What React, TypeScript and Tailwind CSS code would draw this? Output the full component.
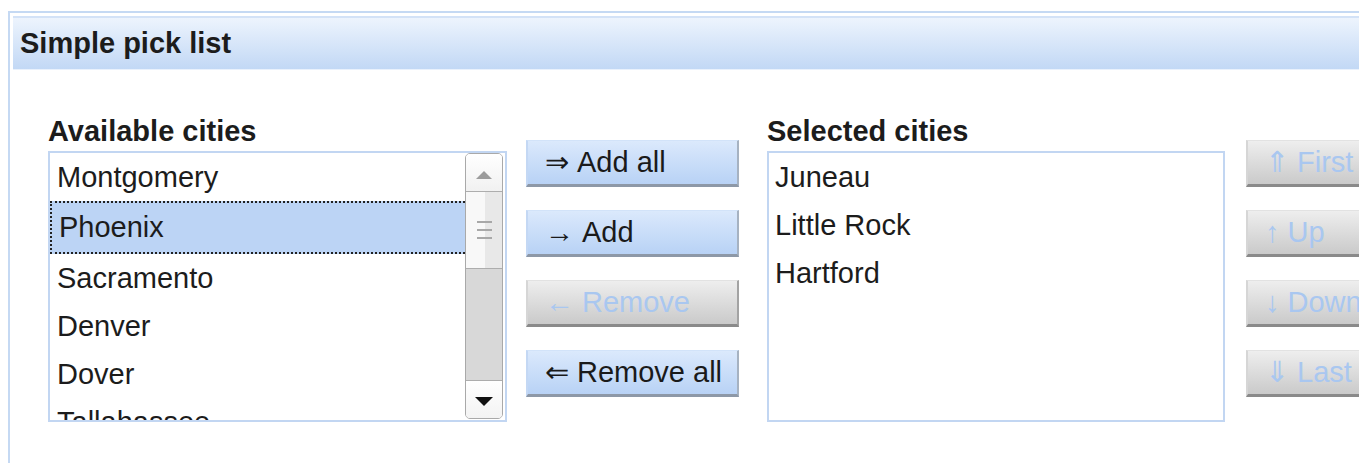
import React from 'react';

const available = ['Montgomery', 'Phoenix', 'Sacramento', 'Denver', 'Dover', 'Tallahassee'];
const selected = ['Juneau', 'Little Rock', 'Hartford'];

function PickButton({ arrow, label, disabled }: { arrow: string; label: string; disabled?: boolean }) {
  const tone = disabled
    ? 'bg-gradient-to-b from-[#eeeeee] to-[#cacaca] border-t-[#e2e2e2] border-l-[#d6d6d6] border-r-[#a3a3a3] border-b-[#8a8a8a] text-[#a9c7f0]'
    : 'bg-gradient-to-b from-[#dbe9fc] to-[#b8d2f5] border-t-[#d2e3f9] border-l-[#c4d8f4] border-r-[#a6b2c1] border-b-[#8d98a7] text-[#1a1a1a]';
  return (
    <button
      className={`shrink-0 w-[213px] h-[47px] flex items-center pl-[17px] border-t border-l-2 border-r-2 border-b-[3px] text-[29px] leading-none whitespace-nowrap ${tone}`}
    >
      <span>{arrow}</span>
      <span className="ml-[8px]">{label}</span>
    </button>
  );
}

function ScrollBar() {
  return (
    <div className="w-[38px] shrink-0 mr-[2px] mb-[1px] flex flex-col border border-[#a9a9a9] rounded-[5px] overflow-hidden">
      {/* up arrow */}
      <div className="h-[38px] flex items-center justify-center bg-gradient-to-b from-white to-[#f1f1f1] border-b border-[#adadad]">
        <svg width="16" height="8" viewBox="0 0 16 8" className="mt-[4px]">
          <polygon points="0,8 8,0 16,8" fill="#9c9c9c" />
        </svg>
      </div>
      {/* thumb */}
      <div className="h-[77px] flex flex-col items-center justify-center gap-[6px] bg-[linear-gradient(to_right,#f8f8f8_52%,#e8e8e8_52%)] border-b border-[#adadad]">
        <div className="w-[15px] h-[2px] bg-[#a8a8a8]" />
        <div className="w-[15px] h-[2px] bg-[#a8a8a8]" />
        <div className="w-[15px] h-[2px] bg-[#a8a8a8]" />
      </div>
      {/* track */}
      <div className="flex-1 bg-[#d8d8d8]" />
      {/* down arrow */}
      <div className="h-[38px] flex items-center justify-center bg-gradient-to-b from-white to-[#f3f3f3] border-t border-[#adadad]">
        <svg width="18" height="9" viewBox="0 0 18 9" className="mt-[4px]">
          <polygon points="0,0 18,0 9,9" fill="#111111" />
        </svg>
      </div>
    </div>
  );
}

export default function App() {
  return (
    <div className="w-[1359px] h-[463px] overflow-hidden bg-white font-['Liberation_Sans',Arial,sans-serif] text-[#1c1c1c]">
      <div className="ml-[8px] mt-[11px] w-[1520px] h-[520px] border-t-2 border-l-2 border-[#c5d9f3] pt-[3px] pl-[3px]">
        {/* panel header */}
        <div className="h-[54px] flex items-center pl-[7px] border-t-2 border-[#d3e2f7] border-b border-b-[#e9f1fc] bg-gradient-to-b from-[#edf4fd] to-[#c2d8f5]">
          <span className="text-[29px] font-bold leading-none">Simple pick list</span>
        </div>

        <div className="flex items-center pt-[45px] pl-[35px]">
          {/* source list */}
          <div className="w-[459px] shrink-0">
            <div className="text-[29px] font-bold leading-[33px] mb-[3px]">Available cities</div>
            <div className="h-[271px] flex border-2 border-[#c2d6f2] bg-white">
              <div className="flex-1 overflow-hidden text-[29px]">
                {available.map((city) =>
                  city === 'Phoenix' ? (
                    <div
                      key={city}
                      className="h-[53px] leading-[49px] pl-[7px] bg-[#bcd4f5] border-y-2 border-l-2 border-dotted border-[#222]"
                    >
                      {city}
                    </div>
                  ) : (
                    <div key={city} className="h-[48px] leading-[48px] pl-[7px] whitespace-nowrap">
                      {city}
                    </div>
                  )
                )}
              </div>
              <ScrollBar />
            </div>
          </div>

          {/* move buttons */}
          <div className="ml-[19px] shrink-0 flex flex-col gap-[23px]">
            <PickButton arrow="⇒" label="Add all" />
            <PickButton arrow="→" label="Add" />
            <PickButton arrow="←" label="Remove" disabled />
            <PickButton arrow="⇐" label="Remove all" />
          </div>

          {/* target list */}
          <div className="ml-[28px] w-[458px] shrink-0">
            <div className="text-[29px] font-bold leading-[33px] mb-[3px]">Selected cities</div>
            <div className="h-[271px] border-2 border-[#c2d6f2] bg-white text-[29px]">
              {selected.map((city) => (
                <div key={city} className="h-[48px] leading-[48px] pl-[6px]">
                  {city}
                </div>
              ))}
            </div>
          </div>

          {/* ordering buttons */}
          <div className="ml-[21px] shrink-0 flex flex-col gap-[23px]">
            <PickButton arrow="⇑" label="First" disabled />
            <PickButton arrow="↑" label="Up" disabled />
            <PickButton arrow="↓" label="Down" disabled />
            <PickButton arrow="⇓" label="Last" disabled />
          </div>
        </div>
      </div>
    </div>
  );
}
